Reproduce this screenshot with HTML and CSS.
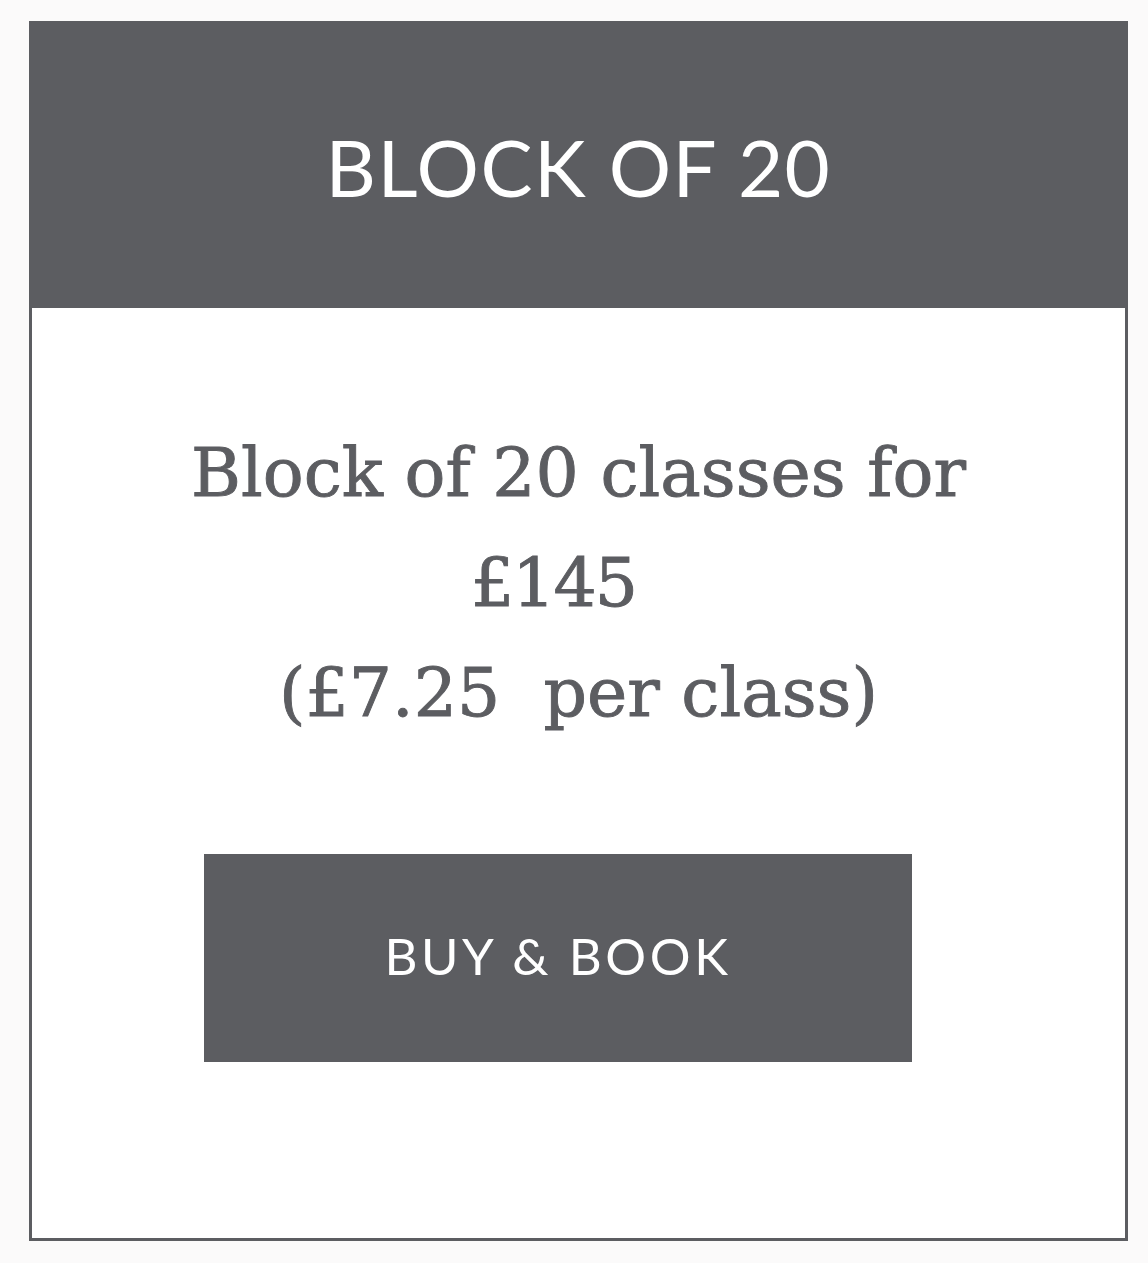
FILE: index.html
```html
<!DOCTYPE html>
<html>
<head>
<meta charset="utf-8">
<link rel="stylesheet" href="styles.css">
</head>
<body>
<div class="card">
  <div class="card-header">
    <h1 class="card-title">BLOCK OF 20</h1>
  </div>
  <div class="card-body">
    <p class="desc">Block of 20 classes for<br><span class="price">£145</span><br>(£7.25&nbsp; per class)</p>
    <a class="btn" href="#">BUY &amp; BOOK</a>
  </div>
</div>
</body>
</html>
```
FILE: styles.css
```css
html, body {
  margin: 0;
  padding: 0;
  background: #fbfafa;
}
body {
  padding: 21px 20px 0 29px;
}
.card {
  width: 1099px;
  height: 1220px;
  box-sizing: border-box;
  border: 3px solid #5c5d61;
  background: #ffffff;
  display: flex;
  flex-direction: column;
}
.card-header {
  background: #5c5d61;
  height: 284px;
  display: flex;
  align-items: center;
  justify-content: center;
}
.card-title {
  margin: 0;
  color: #ffffff;
  font-family: "Lato", sans-serif;
  font-weight: 400;
  font-size: 78px;
  letter-spacing: 1.5px;
  line-height: 1;
  padding-top: 2px;
}
.card-body {
  display: flex;
  flex-direction: column;
  align-items: flex-start;
}
.desc {
  align-self: stretch;
  margin: 110px 0 0 0;
  text-align: center;
  color: #5c5d61;
  font-family: "DejaVu Serif", serif;
  font-size: 68px;
  line-height: 110px;
  -webkit-text-stroke: 0.9px #5c5d61;
}
.price {
  padding-right: 50px;
  letter-spacing: -2px;
}
.btn {
  margin: 106px 0 0 172px;
  width: 708px;
  height: 208px;
  box-sizing: border-box;
  padding-bottom: 6px;
  background: #5c5d61;
  color: #ffffff;
  text-decoration: none;
  display: flex;
  align-items: center;
  justify-content: center;
  font-family: "Lato", sans-serif;
  font-size: 51px;
  letter-spacing: 3.6px;
}
```
